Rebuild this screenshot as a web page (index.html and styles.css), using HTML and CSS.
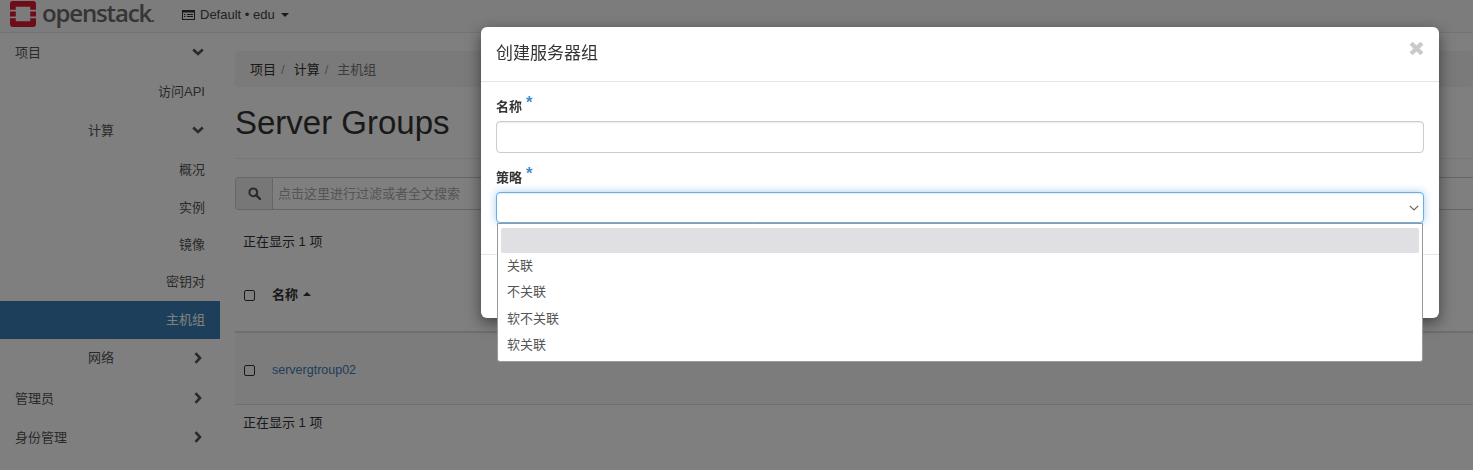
FILE: index.html
```html
<!DOCTYPE html>
<html lang="zh">
<head>
<meta charset="utf-8">
<title>Server Groups</title>
<link rel="stylesheet" href="styles.css">
</head>
<body>
<header class="navbar">
  <svg class="logo" width="26" height="26" viewBox="0 0 27 27"><path fill="#da1a32" d="M3 0h21a3 3 0 0 1 3 3v6h-6V6H6v3H0V3a3 3 0 0 1 3-3zM0 11h6v5H0zM21 11h6v5h-6zM0 18h6v3h15v-3h6v6a3 3 0 0 1-3 3H3a3 3 0 0 1-3-3z"/></svg>
  <span class="wordmark">openstack<span class="dot">.</span></span>
  <span class="project">
    <svg width="13" height="10" viewBox="0 0 13 10"><rect x="0.500" y="0.500" width="12" height="9" fill="none" stroke="#333" stroke-width="1"/><path d="M0 1h13v1.600H0zM2 4h1.500v1H2zM5 4h6v1H5zM2 6h1.500v1H2zM5 6h6v1H5z" fill="#333"/></svg>
    <span>Default • edu</span>
    <i class="caret"></i>
  </span>
</header>
<div class="page">
  <nav class="sidebar">
    <a class="item lvl1 tall">项目<svg class="chev" viewBox="0 0 12 8"><path d="M1.200 1.500 6 6l4.800-4.500"/></svg></a>
    <a class="item lvl3 tall">访问API</a>
    <a class="item lvl2 tall">计算<svg class="chev" viewBox="0 0 12 8"><path d="M1.200 1.500 6 6l4.800-4.500"/></svg></a>
    <a class="item lvl3 tall">概况</a>
    <a class="item lvl3 short">实例</a>
    <a class="item lvl3 short">镜像</a>
    <a class="item lvl3">密钥对</a>
    <a class="item lvl3 active">主机组</a>
    <a class="item lvl2">网络<svg class="chev right" viewBox="0 0 8 12"><path d="M1.500 1.200 6 6l-4.500 4.800"/></svg></a>
    <a class="item lvl1 tall gap">管理员<svg class="chev right" viewBox="0 0 8 12"><path d="M1.500 1.200 6 6l-4.500 4.800"/></svg></a>
    <a class="item lvl1 tall">身份管理<svg class="chev right" viewBox="0 0 8 12"><path d="M1.500 1.200 6 6l-4.500 4.800"/></svg></a>
  </nav>
  <main class="content">
    <ol class="breadcrumb">
      <li>项目</li><li class="sep">/</li><li>计算</li><li class="sep">/</li><li class="current">主机组</li>
    </ol>
    <h1 class="title">Server Groups</h1>
    <div class="search">
      <span class="addon"><svg width="13" height="13" viewBox="0 0 13 13"><circle cx="5.300" cy="5.300" r="3.900" fill="none" stroke="#555" stroke-width="2"/><path d="M8.200 8.200 12 12" stroke="#555" stroke-width="2.400" stroke-linecap="round"/></svg></span>
      <span class="placeholder">点击这里进行过滤或者全文搜索</span>
    </div>
    <p class="count">正在显示 1 项</p>
    <div class="thead"><i class="check"></i><b>名称</b><i class="sort"></i></div>
    <div class="trow"><i class="check"></i><a>servergtroup02</a></div>
    <p class="count foot">正在显示 1 项</p>
  </main>
</div>
<div class="backdrop"></div>
<section class="modal">
  <div class="modal-head">
    <h4>创建服务器组</h4>
    <svg class="close" width="15" height="15" viewBox="0 0 14 14"><path d="M2 2l10 10M12 2 2 12" fill="none" stroke="#c9c9c9" stroke-width="4"/></svg>
  </div>
  <div class="modal-body">
    <label class="lbl">名称<sup>*</sup></label>
    <div class="field"></div>
    <label class="lbl second">策略<sup>*</sup></label>
    <div class="field focus">
      <svg width="10" height="6" viewBox="0 0 10 6"><path d="M.8.8 5 5 9.200.8" fill="none" stroke="#666" stroke-width="1.200"/></svg>
      <ul class="menu">
        <li class="sel"></li>
        <li>关联</li>
        <li>不关联</li>
        <li>软不关联</li>
        <li>软关联</li>
      </ul>
    </div>
  </div>
  <div class="modal-foot"></div>
</section>
</body>
</html>
```
FILE: styles.css
```css
* { box-sizing: border-box; }
html, body { margin: 0; height: 100%; overflow: hidden; }
body {
  background: #fff;
  color: #333;
  font: 13px/18px "Liberation Sans", "Noto Sans CJK SC", sans-serif;
}
.navbar {
  height: 33px;
  background: #f8f8f8;
  border-bottom: 1px solid #e7e7e7;
  display: flex;
  align-items: center;
  padding-left: 10px;
}
.logo { flex: none; margin-bottom: 4px; }
.wordmark {
  margin-left: 6px;
  margin-top: -3px;
  font: 600 24px/27px "Open Sans", sans-serif;
  letter-spacing: -1.150px;
  color: #6a6a6a;
  width: 140px;
  flex: none;
}
.dot { font-size: 14px; letter-spacing: 0; }
.project { display: flex; align-items: center; gap: 5px; margin-top: -2px; font-size: 13px; color: #444; }
.caret { width: 0; height: 0; border: 4px solid transparent; border-top-color: #333; border-bottom: 0; margin-left: 1px; }
.page { display: flex; }
.sidebar { width: 220px; flex: none; display: flex; flex-direction: column; }
.item {
  height: 38px;
  display: flex;
  align-items: center;
  color: #555;
  position: relative;
  flex: none;
}
.item.tall { height: 39px; }
.item.short { height: 37px; }
.item.gap { margin-top: 2px; }
.lvl1 { padding-left: 15px; }
.lvl2 { padding-left: 88px; }
.lvl3 { justify-content: flex-end; padding-right: 15px; }
.active { background: #3d7eb7; color: #fff; }
.chev {
  position: absolute;
  right: 16px;
  top: 15px;
  width: 12px;
  height: 8px;
  fill: none;
  stroke: #555;
  stroke-width: 2.600;
}
.chev.right { width: 8px; height: 12px; right: 18px; top: 13px; }
.content { flex: 1; min-width: 0; padding: 18px 0 0 15px; }
.breadcrumb {
  list-style: none;
  margin: 0;
  height: 36px;
  padding: 1px 15px 0;
  background: #f5f5f5;
  border-radius: 4px;
  display: flex;
  align-items: center;
  gap: 5px;
}
.breadcrumb .sep { color: #999; margin-right: 4px; }
.breadcrumb .current { color: #777; }
.title {
  font: 400 33px/36px "Liberation Sans", sans-serif;
  color: #333;
  margin: 18px 0 0;
  padding-bottom: 17px;
  border-bottom: 1px solid #eee;
}
.search {
  display: flex;
  height: 33px;
  margin-top: 18px;
  border: 1px solid #ccc;
  border-radius: 4px 0 0 4px;
  border-right: 0;
  background: #fff;
}
.addon {
  width: 37px;
  background: #eee;
  border-right: 1px solid #ccc;
  display: flex;
  align-items: center;
  justify-content: center;
  border-radius: 3px 0 0 3px;
}
.placeholder { padding-left: 5px; color: #aaa; line-height: 31px; }
.count { margin: 23px 0 0 8px; height: 18px; color: #333; }
.thead {
  height: 82px;
  padding: 8px 0 0 9px;
  border-bottom: 2px solid #ddd;
  display: flex;
  align-items: center;
  color: #333;
}
.check { display: block; width: 11px; height: 11px; border: 1px solid #333; border-radius: 2px; flex: none; }
.thead b { margin-left: 17px; }
.sort { width: 0; height: 0; border: 4px solid transparent; border-bottom-color: #333; border-top: 0; margin: -3px 0 0 5px; }
.trow {
  height: 72px;
  padding: 3px 0 0 9px;
  background: #f9f9f9;
  border-bottom: 1px solid #ddd;
  display: flex;
  align-items: center;
}
.trow a { margin-left: 17px; font-size: 12.500px; color: #427ab3; }
.count.foot { margin-top: 9px; }
.backdrop { position: fixed; inset: 0; background: rgba(0, 0, 0, .5); }
.modal {
  position: absolute;
  left: 481px;
  top: 27px;
  width: 958px;
  height: 291px;
  background: #fff;
  border-radius: 6px;
  box-shadow: 0 5px 15px rgba(0, 0, 0, .5);
  display: flex;
  flex-direction: column;
}
.modal-head {
  height: 55px;
  flex: none;
  padding: 0 15px;
  border-bottom: 1px solid #e5e5e5;
  display: flex;
  align-items: center;
  justify-content: space-between;
}
.modal-head h4 { margin: 0; font-size: 17px; font-weight: 400; color: #333; }
.close { margin: -11px 0 0 0; }
.modal-body { padding: 12px 15px 0; height: 172px; flex: none; }
.lbl { display: block; height: 20px; margin-bottom: 7px; font-weight: 700; color: #333; padding-top: 3px; line-height: 20px; }
.lbl.second { margin-top: 12px; }
.lbl sup { color: #428bca; font-size: 17px; font-weight: 700; margin-left: 4px; vertical-align: 3px; line-height: 0; }
.field { position: relative; height: 32px; border: 1px solid #ccc; border-radius: 4px; box-shadow: inset 0 1px 1px rgba(0, 0, 0, .075); background: #fff; }
.field.focus { height: 31px; border-color: #66afe9; box-shadow: inset 0 1px 1px rgba(0, 0, 0, .075), 0 0 8px rgba(102, 175, 233, .6); display: flex; align-items: center; justify-content: flex-end; padding-right: 4px; }
.menu {
  list-style: none;
  position: absolute;
  z-index: 2;
  left: 0;
  right: 0;
  top: 30px;
  height: 139px;
  margin: 0;
  padding: 4px 3px 0;
  background: #fff;
  border: 1px solid #999;
  border-radius: 0 0 3px 3px;
  color: #555;
}
.menu li { height: 26.300px; line-height: 26.300px; padding-left: 6px; font-size: 13px; }
.menu li.sel { height: 25px; background: #e0dfe4; border-radius: 2px; }
.modal-foot { border-top: 1px solid #e5e5e5; flex: 1; }
```
